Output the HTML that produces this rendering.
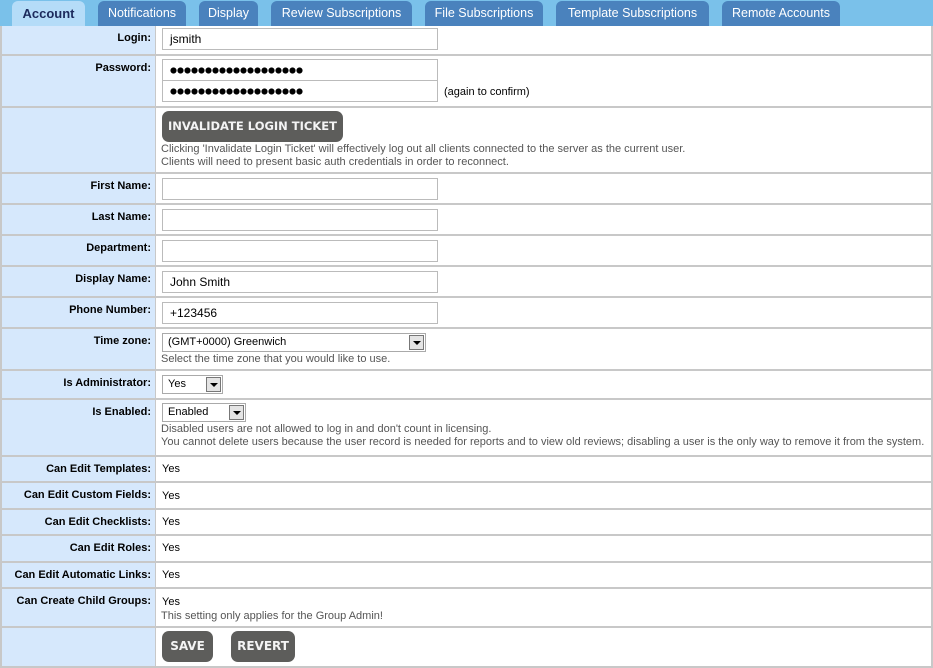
<!DOCTYPE html>
<html><head><meta charset="utf-8"><style>
*{margin:0;padding:0;box-sizing:border-box}
body{width:933px;height:668px;overflow:hidden;background:#c8c8c8;font-family:"Liberation Sans",sans-serif;font-size:11px;position:relative}
.bar{position:absolute;left:0;top:0;width:933px;height:26px;background:#7ac1ea}
.tab{position:absolute;top:1px;height:25px;background:#4a82bd;color:#fff;border-radius:6px 6px 0 0;text-align:center;font-size:12.5px;line-height:25px}
.tab.a{background:#b5dcf8;color:#1c2a5c;font-weight:bold;font-size:13px}
.row{position:absolute;left:0;width:933px}
.l{position:absolute;left:2px;top:0;bottom:0;width:153px;background:#d6e8fc;text-align:right;padding-right:4px;font-weight:bold;color:#000;font-size:11px;padding-top:6px;white-space:nowrap}
.c{position:absolute;left:156px;right:2px;top:0;bottom:0;background:#fff;color:#000;white-space:nowrap}
.in{position:absolute;left:6px;width:276px;height:22px;border:1px solid #bbb;background:#fff;font-size:12px;padding-left:7px;line-height:20px}
.note{position:absolute;left:5px;color:#555;font-size:11px;line-height:13px}
.btn{position:absolute;background:#5d5d5b;color:#f4f4f4;font-weight:bold;border-radius:7px;font-family:"DejaVu Sans",sans-serif;text-align:center}
.sel{position:absolute;left:6px;height:19px;border:1px solid #aaa;background:#fff;font-size:11px;padding-left:5px;line-height:17px}
.sel b{position:absolute;right:1px;top:1px;width:15px;height:15px;background:#e4e4e4;border:1px solid #777}
.sel b:after{content:"";position:absolute;left:3px;top:5px;border-left:4px solid transparent;border-right:4px solid transparent;border-top:4px solid #000}
.yes{position:absolute;left:6px;font-size:11px}
.dots{position:absolute;left:7px;top:7px;width:133px;height:7px;background:radial-gradient(circle at 3.5px 3.5px,#000 2.8px,transparent 3.3px);background-size:7px 7px}
</style></head><body>
<div class="bar"></div>
<div class="tab a" style="left:12px;width:73px">Account</div>
<div class="tab" style="left:98px;width:88px">Notifications</div>
<div class="tab" style="left:199px;width:59px">Display</div>
<div class="tab" style="left:271px;width:141px">Review Subscriptions</div>
<div class="tab" style="left:425px;width:118px">File Subscriptions</div>
<div class="tab" style="left:556px;width:153px">Template Subscriptions</div>
<div class="tab" style="left:722px;width:118px">Remote Accounts</div>

<div class="row" style="top:26px;height:28px"><div class="l">Login:</div><div class="c"><div class="in" style="top:2px">jsmith</div></div></div>
<div class="row" style="top:56px;height:50px"><div class="l">Password:</div><div class="c"><div class="in" style="top:3px"><div class="dots"></div></div><div class="in" style="top:24px"><div class="dots"></div></div><div style="position:absolute;left:288px;top:30px;font-size:11px">(again to confirm)</div></div></div>
<div class="row" style="top:108px;height:64px"><div class="l"></div><div class="c"><div class="btn" style="left:6px;top:3px;width:181px;height:31px;line-height:31px;font-size:11.5px">INVALIDATE LOGIN TICKET</div><div class="note" style="top:35px">Clicking 'Invalidate Login Ticket' will effectively log out all clients connected to the server as the current user.<br>Clients will need to present basic auth credentials in order to reconnect.</div></div></div>
<div class="row" style="top:174px;height:29px"><div class="l">First Name:</div><div class="c"><div class="in" style="top:4px"></div></div></div>
<div class="row" style="top:205px;height:29px"><div class="l">Last Name:</div><div class="c"><div class="in" style="top:4px"></div></div></div>
<div class="row" style="top:236px;height:29px"><div class="l">Department:</div><div class="c"><div class="in" style="top:4px"></div></div></div>
<div class="row" style="top:267px;height:29px"><div class="l">Display Name:</div><div class="c"><div class="in" style="top:4px">John Smith</div></div></div>
<div class="row" style="top:298px;height:29px"><div class="l">Phone Number:</div><div class="c"><div class="in" style="top:4px">+123456</div></div></div>
<div class="row" style="top:329px;height:40px"><div class="l">Time zone:</div><div class="c"><div class="sel" style="top:4px;width:264px">(GMT+0000) Greenwich<b></b></div><div class="note" style="top:24px">Select the time zone that you would like to use.</div></div></div>
<div class="row" style="top:371px;height:27px"><div class="l">Is Administrator:</div><div class="c"><div class="sel" style="top:4px;width:61px">Yes<b></b></div></div></div>
<div class="row" style="top:400px;height:55px"><div class="l">Is Enabled:</div><div class="c"><div class="sel" style="top:3px;width:84px">Enabled<b></b></div><div class="note" style="top:23px">Disabled users are not allowed to log in and don't count in licensing.<br>You cannot delete users because the user record is needed for reports and to view old reviews; disabling a user is the only way to remove it from the system.</div></div></div>
<div class="row" style="top:457px;height:24px"><div class="l">Can Edit Templates:</div><div class="c"><div class="yes" style="top:6px">Yes</div></div></div>
<div class="row" style="top:483px;height:25px"><div class="l">Can Edit Custom Fields:</div><div class="c"><div class="yes" style="top:7px">Yes</div></div></div>
<div class="row" style="top:510px;height:24px"><div class="l">Can Edit Checklists:</div><div class="c"><div class="yes" style="top:6px">Yes</div></div></div>
<div class="row" style="top:536px;height:25px"><div class="l">Can Edit Roles:</div><div class="c"><div class="yes" style="top:6px">Yes</div></div></div>
<div class="row" style="top:563px;height:24px"><div class="l">Can Edit Automatic Links:</div><div class="c"><div class="yes" style="top:6px">Yes</div></div></div>
<div class="row" style="top:589px;height:37px"><div class="l">Can Create Child Groups:</div><div class="c"><div class="yes" style="top:7px">Yes</div><div class="note" style="top:21px">This setting only applies for the Group Admin!</div></div></div>
<div class="row" style="top:628px;height:38px"><div class="l"></div><div class="c"><div class="btn" style="left:6px;top:3px;width:51px;height:31px;line-height:31px;font-size:12px">SAVE</div><div class="btn" style="left:75px;top:3px;width:64px;height:31px;line-height:31px;font-size:12px">REVERT</div></div></div>
</body></html>
